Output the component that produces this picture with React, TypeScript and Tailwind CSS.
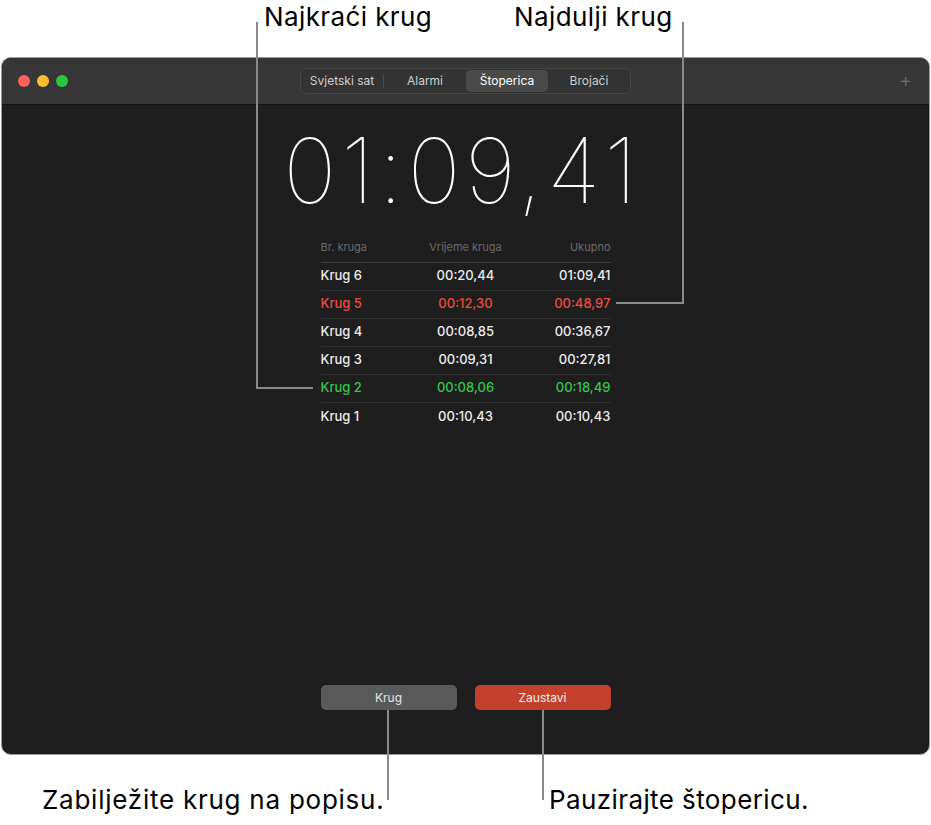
import React from "react";

const laps = [
  { name: "Krug 6", lap: "00:20,44", total: "01:09,41", color: "text-[#ececec]" },
  { name: "Krug 5", lap: "00:12,30", total: "00:48,97", color: "text-[#ee4a3f]" },
  { name: "Krug 4", lap: "00:08,85", total: "00:36,67", color: "text-[#ececec]" },
  { name: "Krug 3", lap: "00:09,31", total: "00:27,81", color: "text-[#ececec]" },
  { name: "Krug 2", lap: "00:08,06", total: "00:18,49", color: "text-[#33c64c]" },
  { name: "Krug 1", lap: "00:10,43", total: "00:10,43", color: "text-[#ececec]" },
];

export default function App() {
  return (
    <div
      className="relative w-[931px] h-[825px] bg-white overflow-hidden"
      style={{ fontFamily: "Inter, 'Noto Sans', sans-serif" }}
    >
      {/* window */}
      <div className="absolute left-[1px] top-[57px] w-[929px] h-[698px] rounded-[10px] border border-[#9a9a9a] bg-[#1e1e1e] overflow-hidden flex flex-col">
        {/* title bar */}
        <div className="h-[47px] shrink-0 bg-[#363636] border-b border-[#121212] grid grid-cols-[1fr_auto_1fr] items-center px-[16px]">
          <div className="flex gap-[7px]">
            <span className="w-[12px] h-[12px] rounded-full bg-[#fe5f57]" />
            <span className="w-[12px] h-[12px] rounded-full bg-[#febc2e]" />
            <span className="w-[12px] h-[12px] rounded-full bg-[#28c840]" />
          </div>
          <div className="flex items-center h-[26px] rounded-[6px] border border-[#454545] bg-[#333333] text-[12px] text-[#cfcfcf]">
            <div className="w-[82px] h-[22px] flex items-center justify-center">Svjetski sat</div>
            <div className="w-px h-[14px] bg-[#4a4a4a]" />
            <div className="w-[82px] h-[22px] flex items-center justify-center">Alarmi</div>
            <div className="w-[82px] h-[22px] flex items-center justify-center rounded-[5px] bg-[#4a4a4a] text-white">Štoperica</div>
            <div className="w-[82px] h-[22px] flex items-center justify-center">Brojači</div>
          </div>
          <div className="flex justify-end">
            <div className="text-[#6e6e6e] text-[20px] font-light leading-none -mt-[2px] mr-[1px]">+</div>
          </div>
        </div>
        {/* body */}
        <div className="flex-1 flex flex-col items-center">
          <div className="mt-[10px] mr-[6px] text-[90px] font-thin leading-none text-white tracking-[4.5px] h-[112px] flex items-center">
            01:09,41
          </div>
          <div className="mt-[12px] w-[290px]">
            <div className="grid grid-cols-3 text-[11px] text-[#6a6a6a] pb-[6px] border-b border-[#3a3a3a]">
              <div>Br. kruga</div>
              <div className="text-center">Vrijeme kruga</div>
              <div className="text-right">Ukupno</div>
            </div>
            {laps.map((l, i) => (
              <div
                key={l.name}
                className={`grid grid-cols-3 h-[28px] items-center text-[13px] font-medium ${l.color} ${i < laps.length - 1 ? "border-b border-[#2e2e2e]" : ""}`}
              >
                <div>{l.name}</div>
                <div className="text-center">{l.lap}</div>
                <div className="text-right">{l.total}</div>
              </div>
            ))}
          </div>
          <div className="flex-1" />
          <div className="flex gap-[18px] mb-[44px]">
            <button className="w-[136px] h-[25px] rounded-[5px] bg-[#595959] text-[12px] text-[#e6e6e6]">Krug</button>
            <button className="w-[136px] h-[25px] rounded-[5px] bg-[#c3402c] text-[12px] text-[#f2f2f2]">Zaustavi</button>
          </div>
        </div>
      </div>

      {/* callout lines */}
      <svg className="absolute inset-0 pointer-events-none" width="931" height="825">
        <g stroke="#8a8a8a" strokeWidth="2" fill="none">
          <polyline points="257,22 257,388 313,388" />
          <polyline points="683,22 683,303 616,303" />
          <line x1="388" y1="710" x2="388" y2="800" />
          <line x1="543" y1="710" x2="543" y2="800" />
        </g>
      </svg>

      {/* callout labels */}
      <div className="absolute left-[264px] top-[1px] text-[26px] tracking-[0.4px] text-black leading-[32px]">Najkraći krug</div>
      <div className="absolute left-[514px] top-[1px] text-[26px] tracking-[0.4px] text-black leading-[32px]">Najdulji krug</div>
      <div className="absolute left-[42px] top-[784px] text-[26px] tracking-[0.75px] text-black leading-[32px]">Zabilježite krug na popisu.</div>
      <div className="absolute left-[549px] top-[784px] text-[26px] tracking-[0.4px] text-black leading-[32px]">Pauzirajte štopericu.</div>
    </div>
  );
}
